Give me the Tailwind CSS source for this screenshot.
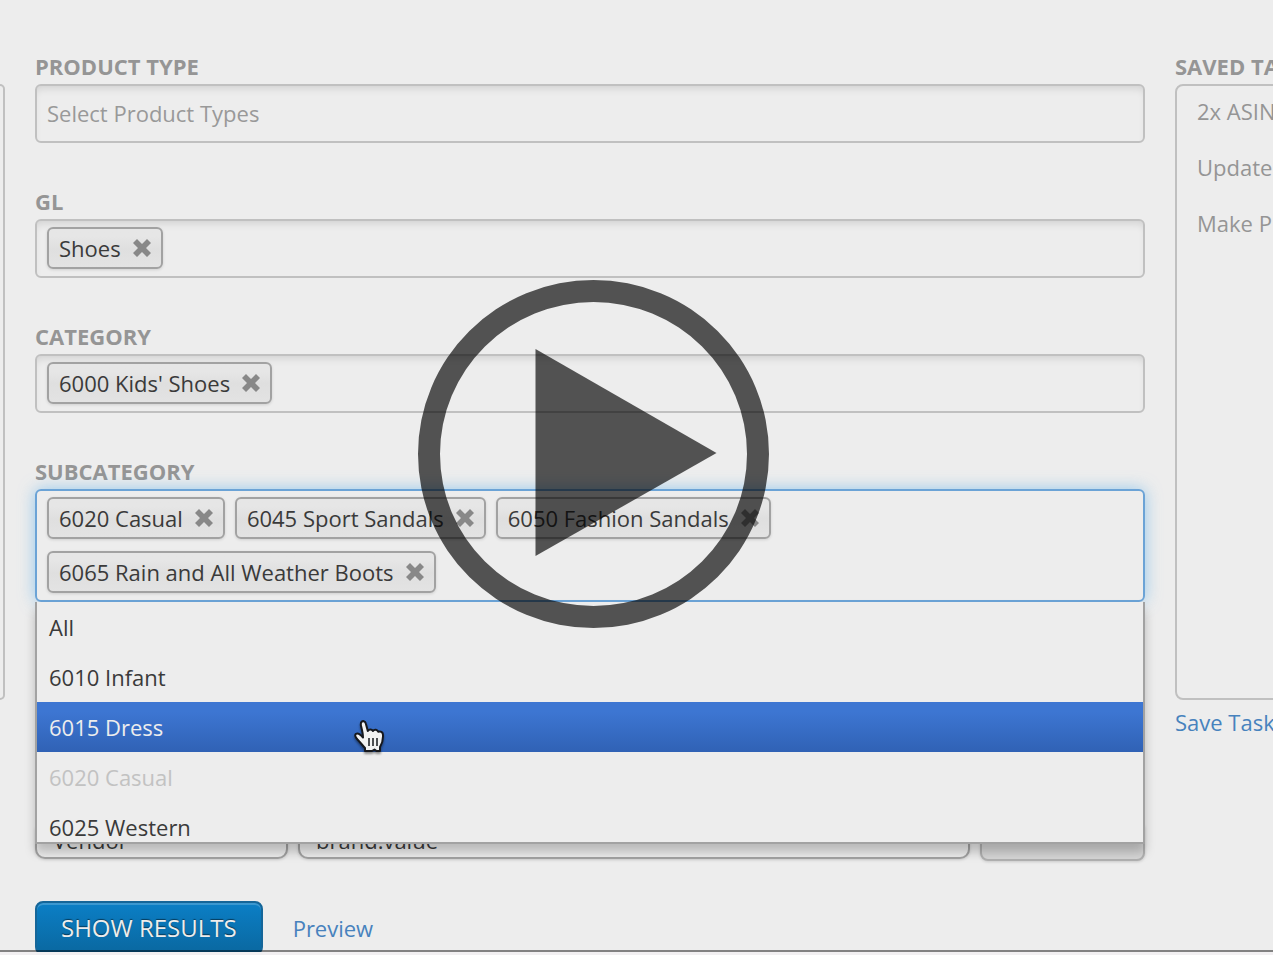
<!DOCTYPE html>
<html lang="en">
<head>
<meta charset="utf-8">
<title>Task filters</title>
<script src="https://cdn.jsdelivr.net/npm/@tailwindcss/browser@4"></script>
</head>
<body class="flex h-screen flex-col overflow-hidden bg-[#f2f0f2] font-['Open_Sans','Noto_Sans',sans-serif] text-[22px] leading-[30px] text-[#3a3a3a]">
<svg class="hidden" aria-hidden="true">
  <symbol id="remove" viewBox="0 0 20 20"><path d="M5 1 10 6 15 1 19 5 14 10 19 15 15 19 10 14 5 19 1 15 6 10 1 5Z" fill="#888"/></symbol>
</svg>
<div class="relative flex flex-1 gap-[30px] overflow-hidden bg-[#ededed] pt-[51px]">
  <aside class="mt-[33px] h-[616px] w-[5px] shrink-0 rounded-r-[6px] border-2 border-l-0 border-[#c0c0c0]"></aside>

  <main class="min-w-0 flex-1">
    <form>
      <div class="mb-[43px]">
        <label for="ptype" class="mb-[3px] block font-bold text-[#959595]">PRODUCT TYPE</label>
        <input id="ptype" type="text" placeholder="Select Product Types" class="block h-[59px] w-full rounded-[6px] border-2 border-[#c0c0c0] px-[10px] pb-[2px] shadow-[inset_0_6px_8px_-4px_rgba(0,0,0,0.13)] outline-none placeholder:text-[#999]">
      </div>

      <div class="mb-[43px]">
        <div id="gl" class="mb-[3px] font-bold text-[#959595]">GL</div>
        <div role="group" aria-labelledby="gl" class="flex flex-wrap gap-x-[10px] gap-y-3 rounded-[6px] border-2 border-[#c0c0c0] px-[10px] pt-[6px] pb-[7px] shadow-[inset_0_6px_8px_-4px_rgba(0,0,0,0.13)]">
          <span class="flex h-[42px] items-center gap-[11px] rounded-[6px] border-2 border-[#a2a2a2] bg-linear-to-b from-[#e6e6e6] from-20% via-[#dfdfdf] via-52% to-[#e3e3e3] pr-[9px] pl-[10px] shadow-[0_1px_3px_rgba(0,0,0,0.12)]">Shoes<button type="button" aria-label="Remove Shoes"><svg class="size-5"><use href="#remove"/></svg></button></span>
        </div>
      </div>

      <div class="mb-[43px]">
        <div id="cat" class="mb-[3px] font-bold text-[#959595]">CATEGORY</div>
        <div role="group" aria-labelledby="cat" class="flex flex-wrap gap-x-[10px] gap-y-3 rounded-[6px] border-2 border-[#c0c0c0] px-[10px] pt-[6px] pb-[7px] shadow-[inset_0_6px_8px_-4px_rgba(0,0,0,0.13)]">
          <span class="flex h-[42px] items-center gap-[11px] rounded-[6px] border-2 border-[#a2a2a2] bg-linear-to-b from-[#e6e6e6] from-20% via-[#dfdfdf] via-52% to-[#e3e3e3] pr-[9px] pl-[10px] shadow-[0_1px_3px_rgba(0,0,0,0.12)]">6000 Kids' Shoes<button type="button" aria-label="Remove 6000 Kids' Shoes"><svg class="size-5"><use href="#remove"/></svg></button></span>
        </div>
      </div>

      <div class="relative mb-[219px]">
        <div id="sub" class="mb-[3px] font-bold text-[#959595]">SUBCATEGORY</div>
        <div role="group" aria-labelledby="sub" class="relative flex flex-wrap gap-x-[10px] gap-y-3 rounded-[6px] border-2 border-[#6ba3d6] px-[10px] pt-[6px] pb-[7px] shadow-[0_0_16px_rgba(90,175,235,0.6)]">
          <span class="flex h-[42px] items-center gap-[11px] rounded-[6px] border-2 border-[#a2a2a2] bg-linear-to-b from-[#e6e6e6] from-20% via-[#dfdfdf] via-52% to-[#e3e3e3] pr-[9px] pl-[10px] shadow-[0_1px_3px_rgba(0,0,0,0.12)]">6020 Casual<button type="button" aria-label="Remove 6020 Casual"><svg class="size-5"><use href="#remove"/></svg></button></span>
          <span class="flex h-[42px] items-center gap-[11px] rounded-[6px] border-2 border-[#a2a2a2] bg-linear-to-b from-[#e6e6e6] from-20% via-[#dfdfdf] via-52% to-[#e3e3e3] pr-[9px] pl-[10px] shadow-[0_1px_3px_rgba(0,0,0,0.12)]">6045 Sport Sandals<button type="button" aria-label="Remove 6045 Sport Sandals"><svg class="size-5"><use href="#remove"/></svg></button></span>
          <span class="flex h-[42px] items-center gap-[11px] rounded-[6px] border-2 border-[#a2a2a2] bg-linear-to-b from-[#e6e6e6] from-20% via-[#dfdfdf] via-52% to-[#e3e3e3] pr-[9px] pl-[10px] shadow-[0_1px_3px_rgba(0,0,0,0.12)]">6050 Fashion Sandals<button type="button" aria-label="Remove 6050 Fashion Sandals"><svg class="size-5"><use href="#remove"/></svg></button></span>
          <span class="flex h-[42px] items-center gap-[11px] rounded-[6px] border-2 border-[#a2a2a2] bg-linear-to-b from-[#e6e6e6] from-20% via-[#dfdfdf] via-52% to-[#e3e3e3] pr-[9px] pl-[10px] shadow-[0_1px_3px_rgba(0,0,0,0.12)]">6065 Rain and All Weather Boots<button type="button" aria-label="Remove 6065 Rain and All Weather Boots"><svg class="size-5"><use href="#remove"/></svg></button></span>
        </div>
        <ul role="listbox" aria-labelledby="sub" class="absolute inset-x-0 top-full z-10 h-[242px] overflow-hidden border-2 border-t-0 border-[#a2a2a2] bg-[#ededed] leading-[50px] shadow-[0_8px_10px_rgba(0,0,0,0.22)]">
          <li role="option" class="h-[50px] px-3">All</li>
          <li role="option" class="h-[50px] px-3">6010 Infant</li>
          <li role="option" aria-selected="true" class="h-[50px] bg-linear-to-b from-[#3d76d2] from-20% to-[#3062b5] px-3 text-[#ededed]">6015 Dress</li>
          <li role="option" aria-disabled="true" class="h-[50px] px-3 text-[#c2c2c2]">6020 Casual</li>
          <li role="option" class="h-[50px] px-3">6025 Western</li>
        </ul>
      </div>

      <div class="mb-[40px] flex items-end gap-[10px]">
        <select aria-label="Field" class="mb-[2px] h-[38px] w-[253px] appearance-none rounded-[10px] border-2 border-[#a2a2a2] bg-[#ededed] px-4 leading-[30px] shadow-[0_1px_3px_rgba(0,0,0,0.15)]"><option>Vendor</option></select>
        <input aria-label="Value" type="text" value="brand.value" class="mb-[2px] h-[38px] min-w-0 flex-1 rounded-[10px] border-2 border-[#a2a2a2] bg-[#ededed] px-4 shadow-[0_1px_3px_rgba(0,0,0,0.15)]">
        <button type="button" aria-label="Add" class="h-[40px] w-[165px] rounded-[8px] border-2 border-[#b0b0b0] bg-[#d6d6d6] shadow-[0_1px_3px_rgba(0,0,0,0.15)]"></button>
      </div>

      <div class="flex items-center gap-[30px]">
        <button type="submit" class="h-[54px] rounded-[8px] border-2 border-[#156699] bg-linear-to-b from-[#0b7fc6] to-[#0a68a0] px-6 text-[24px] text-[#ededed] shadow-[inset_0_2px_0_rgba(255,255,255,0.2)] text-shadow-[0_-1px_1px_rgba(0,0,0,0.5)]">SHOW RESULTS</button>
        <a href="#preview" class="text-[#4782bd]">Preview</a>
      </div>
    </form>
  </main>

  <aside class="w-[98px] shrink-0 overflow-hidden whitespace-nowrap">
    <h2 class="mb-[3px] font-bold text-[#959595]">SAVED TASKS</h2>
    <ul class="flex h-[616px] w-[300px] flex-col gap-[26px] rounded-[8px] border-2 border-[#c0c0c0] px-5 pt-[10px] text-[#959595]">
      <li>2x ASIN</li>
      <li>Update</li>
      <li>Make P</li>
    </ul>
    <a href="#save" class="mt-[7px] block text-[#4782bd]">Save Task</a>
  </aside>

  <svg class="absolute top-[280px] left-[418px] z-20" width="351" height="348" viewBox="0 0 351 348" role="img" aria-label="Play video">
    <path fill="#000" fill-opacity=".655" fill-rule="evenodd" d="M0 174a175.500 174 0 1 1 351 0a175.500 174 0 1 1-351 0ZM22 174a153.500 152 0 1 0 307 0a153.500 152 0 1 0-307 0Z"/>
    <path fill="#000" fill-opacity=".655" d="M117.500 69 298.500 173 117.500 276Z"/>
  </svg>

  <svg class="absolute top-[718px] left-[352px] z-20 drop-shadow-[0_2px_1px_rgba(0,0,0,0.4)]" width="36" height="38" viewBox="0 0 36 38" aria-hidden="true">
    <path d="M9 4.500C10.500 2.200 13.200 3 13.800 5.500L15.800 13C17 10.800 20 11 20.800 13C22.500 10.900 25.500 11.600 26.200 13.800C28.500 12.700 31 14.200 31 17C31.300 22 30.500 25 28 29V33H24.500L22.500 31.500 20 33H13V30C10.500 27.500 8 24 5.500 21.500C3.300 19 2.500 17 4 15.800C6 14.800 8.500 16.500 11 19.500C11 15 9.500 10 8.800 7Z" fill="#f2f2f2" stroke="#16181d" stroke-width="2" stroke-linejoin="round"/>
    <path d="M17 20v8M21 20v8M25 20v8" stroke="#16181d" stroke-width="1.500"/>
  </svg>
  <div class="absolute inset-x-0 bottom-0 h-[2px] bg-black/45"></div>
</div>
<footer class="h-[3px]"></footer>
</body>
</html>
